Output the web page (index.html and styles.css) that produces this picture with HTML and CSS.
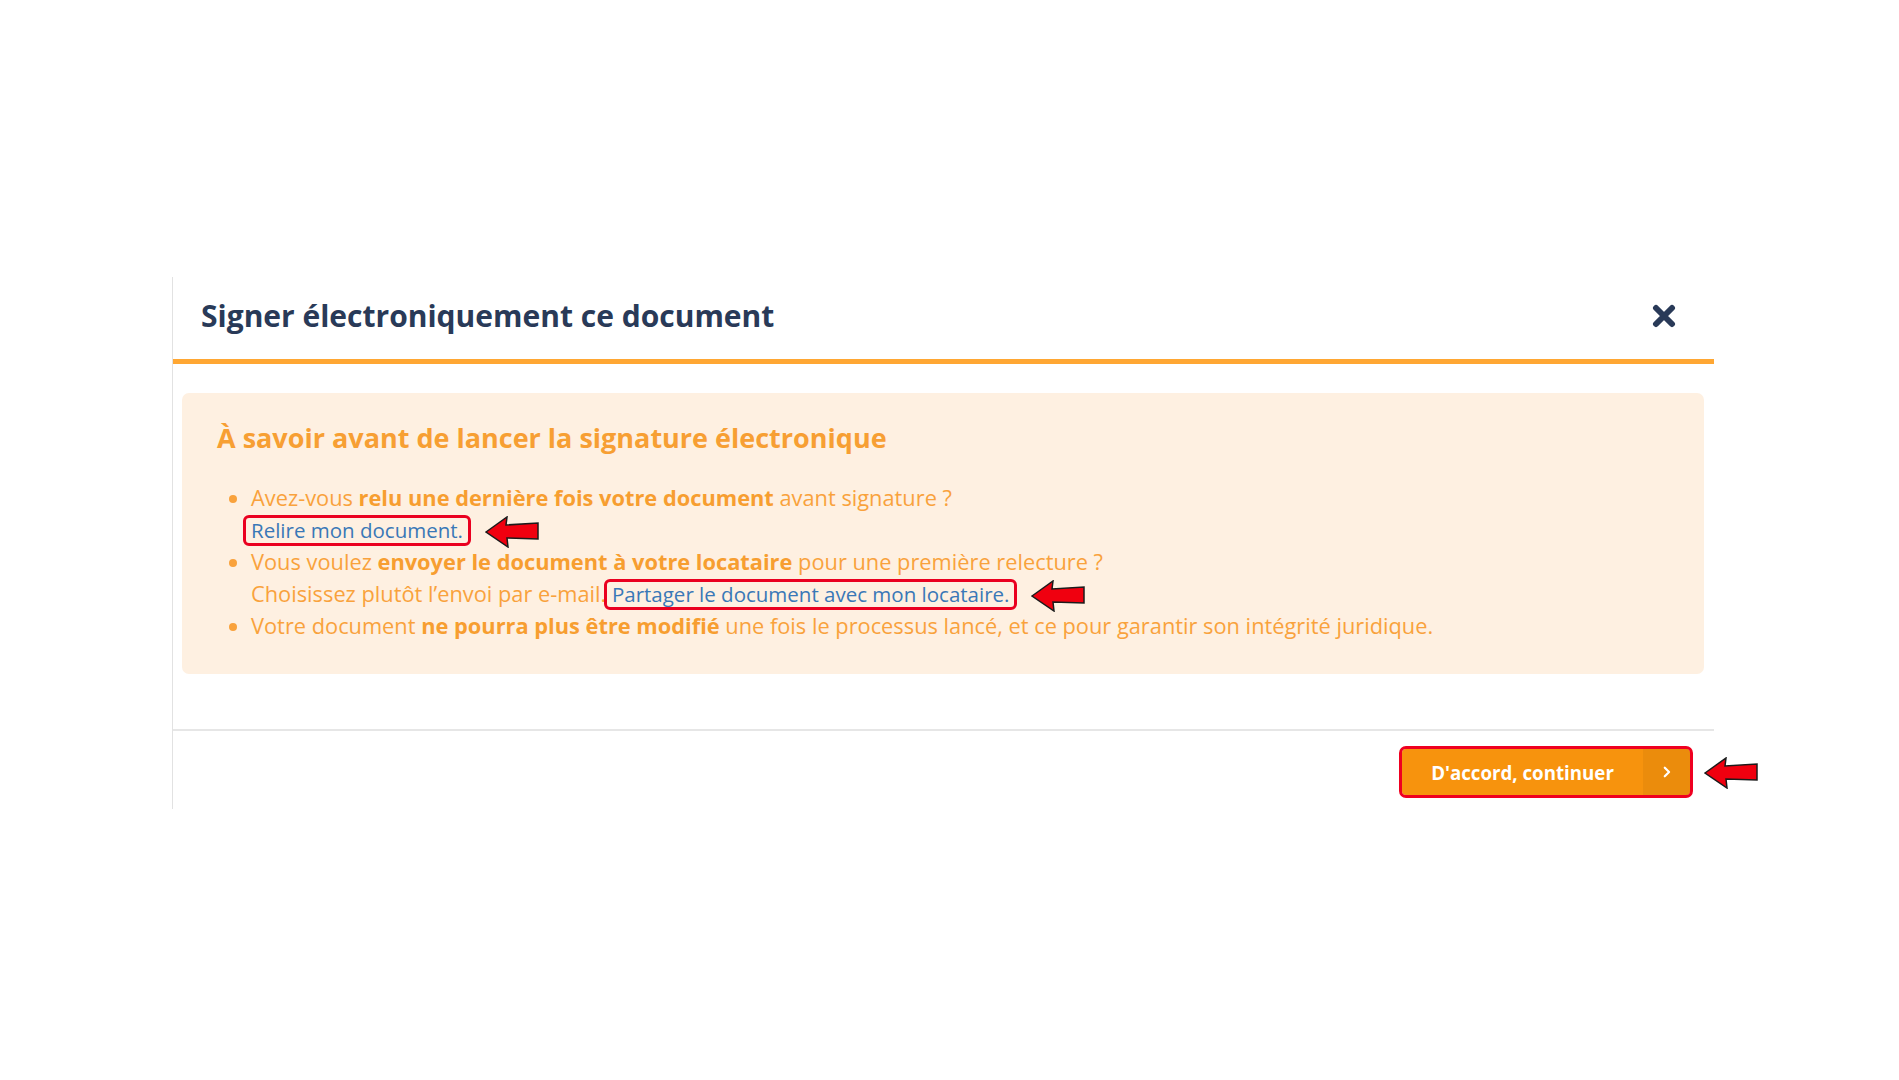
FILE: index.html
```html
<!DOCTYPE html>
<html lang="fr">
<head>
  <meta charset="UTF-8" />
  <meta name="viewport" content="width=device-width, initial-scale=1.0"/>
  <title>Signer électroniquement ce document</title>
  <link rel="stylesheet" href="styles.css">
</head>
<body>

  <div class="page">
    <div class="modal">
      <div class="modal-header">
        <h2 class="modal-title">Signer électroniquement ce document</h2>
        <button class="close-btn" aria-label="Fermer">
          <svg viewBox="0 0 24 24" width="24" height="24"><path d="M4 4 L20 20 M20 4 L4 20" /></svg>
        </button>
      </div>

      <div class="modal-body">
        <div class="notice">
          <h3 class="notice-title">À savoir avant de lancer la signature électronique</h3>
          <ul class="notice-list">
            <li>
              Avez-vous <strong>relu une dernière fois votre document</strong> avant signature ?<br>
              <a href="#" class="doc-link marked">Relire mon document.</a>
              <svg class="pointer" viewBox="0 0 54 32" width="54" height="32"><polygon points="1,16 22,1 21,9 53,7 53,23 22,22 23,31" /></svg>
            </li>
            <li>
              Vous voulez <strong>envoyer le document à votre locataire</strong> pour une première relecture ?<br>
              Choisissez plutôt l’envoi par e-mail. <a href="#" class="doc-link marked">Partager le document avec mon locataire.</a>
              <svg class="pointer" viewBox="0 0 54 32" width="54" height="32"><polygon points="1,16 22,1 21,9 53,7 53,23 22,22 23,31" /></svg>
            </li>
            <li>
              Votre document <strong>ne pourra plus être modifié</strong> une fois le processus lancé, et ce pour garantir son intégrité juridique.
            </li>
          </ul>
        </div>
      </div>

      <div class="modal-footer">
        <div class="btn-wrap">
          <button class="btn-continue">
            <span class="btn-label">D'accord, continuer</span>
            <span class="btn-icon">
              <svg viewBox="0 0 10 14" width="9" height="12"><path d="M3 2 L8 7 L3 12" /></svg>
            </span>
          </button>
          <svg class="pointer pointer-btn" viewBox="0 0 54 32" width="54" height="32"><polygon points="1,16 22,1 21,9 53,7 53,23 22,22 23,31" /></svg>
        </div>
      </div>
    </div>
  </div>

</body>
</html>
```

FILE: styles.css
```css
body {
  margin: 0;
  background-color: #ffffff;
  font-family: 'Open Sans', 'Noto Sans', sans-serif;
}

.page {
  padding: 277px 0 0 172px;
}

.modal {
  width: 1542px;
  box-sizing: border-box;
  border-left: 1px solid #e2e2e2;
  background-color: #fff;
}

/* header */
.modal-header {
  height: 82px;
  display: flex;
  align-items: center;
  justify-content: space-between;
  padding: 0 38px 0 28px;
  border-bottom: 5px solid #ffa733;
}

.modal-title {
  margin: 0 0 6px;
  font-size: 30px;
  font-weight: 700;
  color: #293a58;
}

.close-btn {
  background: none;
  border: none;
  padding: 0;
  cursor: pointer;
  display: flex;
  margin-bottom: 4px;
}

.close-btn path {
  stroke: #293a58;
  stroke-width: 6;
  stroke-linecap: round;
  fill: none;
}

/* body */
.modal-body {
  padding: 29px 10px 55px 9px;
}

.notice {
  background-color: #fef0e1;
  border-radius: 7px;
  padding: 29px 35px 32px;
  color: #f9a23c;
}

.notice-title {
  margin: 0 0 28px;
  font-size: 27px;
  font-weight: 700;
  line-height: 32px;
  color: #f79f33;
}

.notice-list {
  margin: 0;
  padding-left: 34px;
  font-size: 21.8px;
  line-height: 32px;
}

.notice-list strong {
  font-weight: 700;
  color: #f79e30;
}

.doc-link {
  color: #3a78b7;
  font-size: 20.5px;
  text-decoration: none;
  position: relative;
}

/* red annotation frames */
.marked::before {
  content: "";
  position: absolute;
  top: -1px;
  bottom: -2px;
  left: -8px;
  right: -8px;
  border: 3px solid #ea0020;
  border-radius: 6px;
}

.pointer {
  vertical-align: middle;
  margin: -8px 0 -8px 16px;
}

.pointer polygon {
  fill: #f0000f;
  stroke: #1b1b1b;
  stroke-width: 1.5;
  stroke-linejoin: miter;
}

/* footer */
.modal-footer {
  border-top: 2px solid #e6e6e6;
  padding: 18px 24px 14px;
  display: flex;
  justify-content: flex-end;
}

.btn-wrap {
  position: relative;
  display: flex;
}

.btn-continue {
  display: flex;
  align-items: stretch;
  height: 46px;
  width: 288px;
  padding: 0;
  border: none;
  border-radius: 4px;
  background-color: #f7930d;
  color: #fff;
  font-family: 'Open Sans', 'Noto Sans', sans-serif;
  font-size: 18.7px;
  font-weight: 700;
  cursor: pointer;
  overflow: hidden;
  outline: 3px solid #ef0020;
  outline-offset: 0;
}

.btn-label {
  flex: 1;
  display: flex;
  align-items: center;
  justify-content: center;
}

.btn-icon {
  width: 47px;
  display: flex;
  align-items: center;
  justify-content: center;
  background-color: #eb8c0c;
}

.btn-icon path {
  stroke: #fff;
  stroke-width: 2.6;
  fill: none;
  stroke-linecap: round;
  stroke-linejoin: round;
}

.pointer-btn {
  position: absolute;
  left: 100%;
  top: 8px;
  margin: 0 0 0 14px;
}
```
